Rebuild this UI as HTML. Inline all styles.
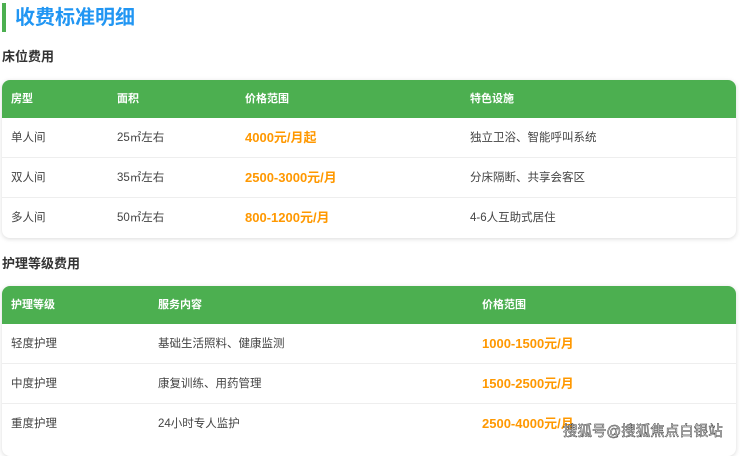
<!DOCTYPE html>
<html><head><meta charset="utf-8"><style>
*{margin:0;padding:0;box-sizing:border-box}
body{width:740px;height:444px;overflow:hidden;background:#fff;font-family:"Liberation Sans","Noto Sans CJK SC",sans-serif;position:relative}
.bar{position:absolute;left:2px;top:3px;width:4px;height:29px;background:#4caf50}
h1{position:absolute;left:15px;top:4px;font-size:20px;font-weight:bold;color:#2196f3;line-height:28px}
h2{position:absolute;left:2px;font-size:13px;font-weight:bold;color:#333;line-height:18px}
.card{position:absolute;left:2px;width:734px;border-radius:8px;background:#fff;box-shadow:0 1px 5px rgba(0,0,0,.15);overflow:hidden}
.row{height:40px;position:relative;border-bottom:1px solid #eee;font-size:11.5px;color:#444}
.row span{position:absolute;top:0;line-height:40px}
.hd{background:#4caf50;height:38px;color:#fff;font-weight:bold;border:none;font-size:11px}
.hd span{line-height:38px}
.p{color:#ff9800;font-weight:bold;font-size:13px}
.wm{position:absolute;left:563px;top:420px;font-size:14.5px;color:#fff;-webkit-text-stroke:0.5px #333;white-space:nowrap}
</style></head><body>
<div class="bar"></div>
<h1>收费标准明细</h1>
<h2 style="top:48px">床位费用</h2>
<div class="card" style="top:80px;height:158px">
<div class="row hd"><span style="left:9px">房型</span><span style="left:115px">面积</span><span style="left:243px">价格范围</span><span style="left:468px">特色设施</span></div>
<div class="row"><span style="left:9px">单人间</span><span style="left:115px">25㎡左右</span><span class="p" style="left:243px">4000元/月起</span><span style="left:468px">独立卫浴、智能呼叫系统</span></div>
<div class="row"><span style="left:9px">双人间</span><span style="left:115px">35㎡左右</span><span class="p" style="left:243px">2500-3000元/月</span><span style="left:468px">分床隔断、共享会客区</span></div>
<div class="row" style="border:none"><span style="left:9px">多人间</span><span style="left:115px">50㎡左右</span><span class="p" style="left:243px">800-1200元/月</span><span style="left:468px">4-6人互助式居住</span></div>
</div>
<h2 style="top:255px">护理等级费用</h2>
<div class="card" style="top:286px;height:170px">
<div class="row hd"><span style="left:9px">护理等级</span><span style="left:156px">服务内容</span><span style="left:480px">价格范围</span></div>
<div class="row"><span style="left:9px">轻度护理</span><span style="left:156px">基础生活照料、健康监测</span><span class="p" style="left:480px">1000-1500元/月</span></div>
<div class="row"><span style="left:9px">中度护理</span><span style="left:156px">康复训练、用药管理</span><span class="p" style="left:480px">1500-2500元/月</span></div>
<div class="row" style="border:none"><span style="left:9px">重度护理</span><span style="left:156px">24小时专人监护</span><span class="p" style="left:480px">2500-4000元/月</span></div>
</div>
<div class="wm">搜狐号@搜狐焦点白银站</div>
</body></html>
